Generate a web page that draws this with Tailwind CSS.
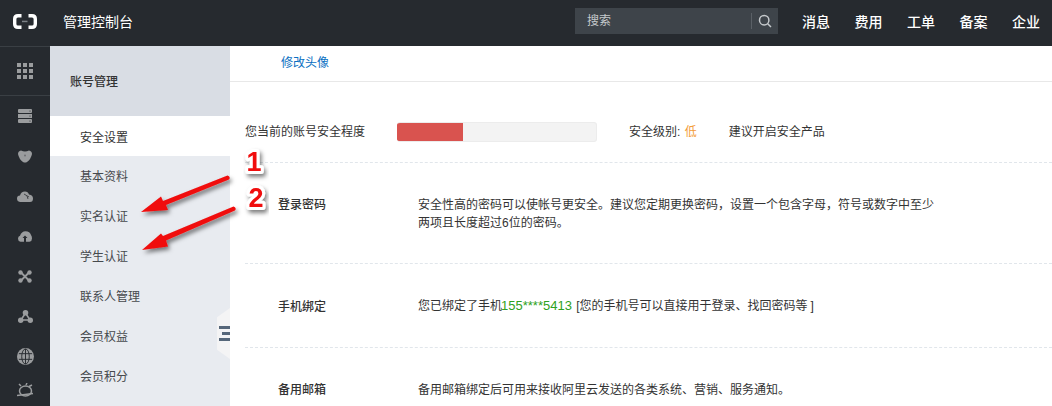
<!DOCTYPE html>
<html lang="zh-CN">
<head>
    <meta charset="UTF-8">
    <title>管理控制台</title>
    <script src="https://cdn.jsdelivr.net/npm/@tailwindcss/browser@4"></script>
</head>
<body class="relative w-[1052px] h-[406px] overflow-hidden bg-white text-[12px] text-[#333] font-['Liberation_Sans','Noto_Sans_CJK_SC',sans-serif]">

    <!-- top bar -->
    <header class="flex items-center h-[46px] pb-[4px] bg-[#262a2f] text-white">
        <div class="flex items-center justify-center w-[50px]">
            <svg width="24" height="15" viewBox="0 0 24 15" fill="none">
                <path d="M8.500 1.700H5Q1.700 1.700 1.700 5V10Q1.700 13.300 5 13.300H8.500M15.500 1.700H19Q22.300 1.700 22.300 5V10Q22.300 13.300 19 13.300H15.500" stroke="#fff" stroke-width="3.400"/>
                <rect x="9" y="6.700" width="5.500" height="1.500" fill="#7d8287"/>
            </svg>
        </div>
        <span class="ml-[13px] mt-[2px] text-[14px]">管理控制台</span>
        <div class="ml-auto flex items-center w-[203px] h-[26px] bg-[#3e444a] text-[#c5c9cc]">
            <span class="ml-[12px] flex-1">搜索</span>
            <span class="w-px h-[16px] bg-[#5a6066]"></span>
            <span class="flex items-center justify-center w-[26px]">
                <svg width="14" height="14" viewBox="0 0 14 14" fill="none" stroke="#c5c9cc" stroke-width="1.500"><circle cx="6.200" cy="6.200" r="4.700"/><path d="M9.700 9.700L13 13"/></svg>
            </span>
        </div>
        <nav class="flex gap-[24.500px] ml-[24px] mr-[12px] mt-[2px] text-[14px] font-medium">
            <span>消息</span><span>费用</span><span>工单</span><span>备案</span><span>企业</span>
        </nav>
    </header>

    <div class="flex h-[360px]">
        <!-- icon rail -->
        <aside class="flex flex-col items-center w-[50px] bg-[#262a2f]">
            <div class="flex items-center justify-center w-full h-[50px] border-t border-b border-[#3a3f44]">
                <svg width="16" height="16" viewBox="0 0 16 16" fill="#9a9c9e"><rect width="4" height="4"/><rect x="6" width="4" height="4"/><rect x="12" width="4" height="4"/><rect y="6" width="4" height="4"/><rect x="6" y="6" width="4" height="4"/><rect x="12" y="6" width="4" height="4"/><rect y="12" width="4" height="4"/><rect x="6" y="12" width="4" height="4"/><rect x="12" y="12" width="4" height="4"/></svg>
            </div>
            <div class="flex items-center justify-center h-[40px]">
                <svg width="14" height="14" viewBox="0 0 14 14" fill="#9a9c9e"><rect y="0" width="14" height="4" rx="1"/><rect y="5" width="14" height="4"/><rect y="10" width="14" height="4" rx="1"/><g fill="#262a2f"><circle cx="12" cy="2" r=".6"/><circle cx="12" cy="7" r=".6"/><circle cx="12" cy="12" r=".6"/></g></svg>
            </div>
            <div class="flex items-center justify-center h-[40px]">
                <svg width="14" height="13" viewBox="0 0 14 13" fill="#9a9c9e"><path d="M3 0.500Q5 1.500 7 1.500T11 0.500Q14 1 14 4Q13 9 9 12Q7 13 5 12Q1 9 0 4Q0 1 3 0.500Z"/><circle cx="7" cy="5.500" r="1" fill="#6e7073"/></svg>
            </div>
            <div class="flex items-center justify-center h-[40px]">
                <svg width="16" height="11" viewBox="0 0 16 11" fill="#9a9c9e"><path d="M4 11H3Q0 10.500 0 7.500T3 4.500Q4 .5 8 .5Q11 .5 12 3.500Q16 4 16 7.500T13 11Z"/><path d="M7 3L12 6M10 5L11 8" stroke="#44474a" fill="none"/></svg>
            </div>
            <div class="flex items-center justify-center h-[40px]">
                <svg width="14" height="11" viewBox="0 0 14 11" fill="#9a9c9e"><path d="M2.500 10.800Q0 10.300 0 7.800Q0 5.500 2 4.800Q3.500 .5 7.500 .3Q12 .5 13 4Q14 5.300 14 7.500Q14 10.300 11.500 10.800H8V7H9.500L7 4.500L4.500 7H6V10.800Z"/></svg>
            </div>
            <div class="flex items-center justify-center h-[40px]">
                <svg width="14" height="13" viewBox="0 0 14 13" fill="#9a9c9e" stroke="#9a9c9e"><path d="M3 2.500L11 10.500M11 2.500L3 10.500" stroke-width="1.800"/><circle cx="2.500" cy="2.500" r="2.200" stroke="none"/><circle cx="11.500" cy="2.500" r="2.200" stroke="none"/><circle cx="2.500" cy="10.500" r="2.200" stroke="none"/><circle cx="11.500" cy="10.500" r="2.200" stroke="none"/></svg>
            </div>
            <div class="flex items-center justify-center h-[40px]">
                <svg width="15" height="13" viewBox="0 0 15 13" fill="#9a9c9e" stroke="#9a9c9e"><path d="M7.500 3L3 10H12Z" fill="none" stroke-width="1.600"/><circle cx="7.500" cy="2.800" r="2.800" stroke="none"/><circle cx="2.700" cy="10.300" r="2.700" stroke="none"/><circle cx="12.300" cy="10.300" r="2.700" stroke="none"/></svg>
            </div>
            <div class="flex items-center justify-center h-[40px]">
                <svg width="17" height="17" viewBox="0 0 18 18" fill="#9a9c9e"><circle cx="9" cy="9" r="9"/><g fill="none" stroke="#262a2f"><ellipse cx="9" cy="9" rx="4" ry="8"/><path d="M9 1V17M2 6H16M2 12H16"/></g></svg>
            </div>
            <div class="flex items-center justify-center h-[30px] pb-[2px]">
                <svg width="17" height="14" viewBox="0 0 17 14" fill="none" stroke="#9a9c9e" stroke-width="1.500"><ellipse cx="8.500" cy="8" rx="6" ry="5"/><path d="M4 3L2 1M9 2L10 0M12 3.500L15 2M0 12.500L16 10.500"/></svg>
            </div>
        </aside>

        <!-- sidebar -->
        <aside class="relative w-[180px] bg-[#e8ebf0] text-[#46494d]">
            <div class="flex items-center h-[70px] pl-[20px] pt-[2px] bg-[#d9dde4] font-medium text-[#333]">账号管理</div>
            <ul>
                <li class="flex items-center h-[40px] pl-[30px] pt-[3px] bg-white text-[#333]">安全设置</li>
                <li class="flex items-center h-[40px] pl-[30px] pt-[2px]">基本资料</li>
                <li class="flex items-center h-[40px] pl-[30px] pt-[2px]">实名认证</li>
                <li class="flex items-center h-[40px] pl-[30px] pt-[2px]">学生认证</li>
                <li class="flex items-center h-[40px] pl-[30px] pt-[2px]">联系人管理</li>
                <li class="flex items-center h-[40px] pl-[30px] pt-[2px]">会员权益</li>
                <li class="flex items-center h-[40px] pl-[30px] pt-[2px]">会员积分</li>
            </ul>
            <!-- collapse handle -->
            <div class="absolute right-0 top-[262px] flex flex-col items-end justify-center gap-[3px] w-[13px] h-[51px] bg-[#f4f4f5] [clip-path:polygon(0_18%,100%_0,100%_100%,0_82%)]">
                <span class="w-[11px] h-[3px] bg-[#56677a]"></span>
                <span class="w-[8px] h-[3px] bg-[#56677a]"></span>
                <span class="w-[11px] h-[3px] bg-[#56677a]"></span>
            </div>
        </aside>

        <!-- main content -->
        <main class="flex-1 pl-[15px]">
            <div class="h-[36px] ml-[-15px] pl-[51px] pt-[8px] border-b border-[#e8e8e8] text-[#0a6fc2]">修改头像</div>
            <div class="flex items-center h-[81px] pt-[20px] border-b border-dashed border-[#e1e6eb]">
                <span class="w-[152px]">您当前的账号安全程度</span>
                <div class="w-[200px] h-[20px] rounded-[3px] bg-[#f3f3f3] border-y border-r border-[#ececec] overflow-hidden">
                    <div class="w-[66px] h-full bg-[#d9534f]"></div>
                </div>
                <span class="ml-[32px]">安全级别: <span class="ml-[1px] text-[#f39c38]">低</span></span>
                <span class="ml-[32px]">建议开启安全产品</span>
            </div>
            <div class="flex h-[101px] border-b border-dashed border-[#e1e6eb] pt-[33px]">
                <span class="w-[173px] pl-[33px] font-medium">登录密码</span>
                <p class="w-[520px] leading-[18px]">安全性高的密码可以使帐号更安全。建议您定期更换密码，设置一个包含字母，符号或数字中至少两项且长度超过6位的密码。</p>
            </div>
            <div class="flex items-center h-[84px] border-b border-dashed border-[#e1e6eb]">
                <span class="w-[173px] pl-[33px] pt-[2px] font-medium">手机绑定</span>
                <p>您已绑定了手机<span class="ml-[-1px] text-[13px] text-[#2ea121]">155****5413</span> <span class="ml-[1px]">[您的手机号可以直接用于登录、找回密码等<span class="ml-[3px]">]</span></span></p>
            </div>
            <div class="flex pt-[33px]">
                <span class="w-[173px] pl-[33px] font-medium">备用邮箱</span>
                <p>备用邮箱绑定后可用来接收阿里云发送的各类系统、营销、服务通知。</p>
            </div>
        </main>
    </div>

    <!-- screenshot annotations: these sit on top of the page -->
    <svg class="absolute left-0 top-0 pointer-events-none" width="1052" height="406" viewBox="0 0 1052 406">
        <defs>
            <filter id="shadow" x="-20%" y="-20%" width="150%" height="150%"><feDropShadow dx="2" dy="3" stdDeviation="2" flood-color="#000" flood-opacity="0.5"/></filter>
        </defs>
        <g filter="url(#shadow)" fill="#f00c0c" stroke="none">
            <path d="M229 179.500L166 205L168 210L141 212L161 196.500L163 201L227.500 175.500Q231 177 229 179.500Z"/>
            <path d="M235 210.500L166 240.500L168 246.500L142 250L161 233.500L163 236L233.500 206.500Q237 208 235 210.500Z"/>
        </g>
        <g filter="url(#shadow)" font-family="Liberation Sans, sans-serif" font-weight="700" font-size="27" fill="#f00c0c" stroke="#fff" stroke-width="6" paint-order="stroke" stroke-linejoin="round" text-anchor="middle">
            <text x="254" y="171">1</text>
            <text x="256" y="207">2</text>
        </g>
    </svg>

</body>
</html>
